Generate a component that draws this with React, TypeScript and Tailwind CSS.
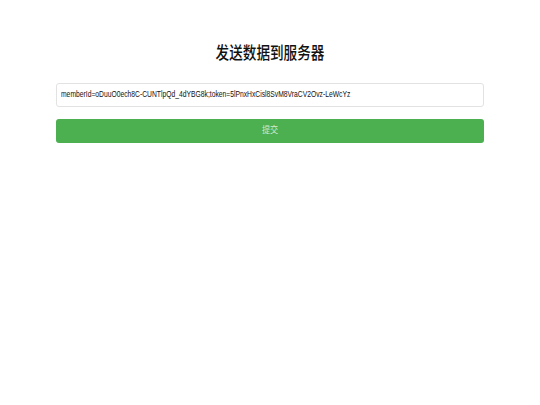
import React from "react";

export default function App() {
  return (
    <div className="w-[540px] h-[405px] bg-white" style={{ fontFamily: '"Liberation Sans", "Noto Sans CJK SC", sans-serif' }}>
      <div className="px-[56px] pt-[40px] flex flex-col">
        <div className="h-[28px] flex items-center justify-center">
          <span className="inline-block text-[17px] leading-[28px] font-medium text-[#111] scale-x-[0.8]">发送数据到服务器</span>
        </div>
        <div className="mt-[15px] h-[24px] border border-[#e2e2e2] rounded-[3px] flex items-center px-[4px] overflow-hidden">
          <span className="inline-block origin-left whitespace-nowrap text-[9px] text-[#111] scale-x-[0.75]">
            memberId=oDuuO0ech8C-CUNTlpQd_4dYBG8k;token=5lPnxHxCisl8SvM8VraCV2Ovz-LeWcYz
          </span>
        </div>
        <div className="mt-[12px] h-[24px] bg-[#4caf50] rounded-[3px] flex items-center justify-center">
          <span className="inline-block text-[9px] text-white/75 scale-x-[0.9]">提交</span>
        </div>
      </div>
    </div>
  );
}
